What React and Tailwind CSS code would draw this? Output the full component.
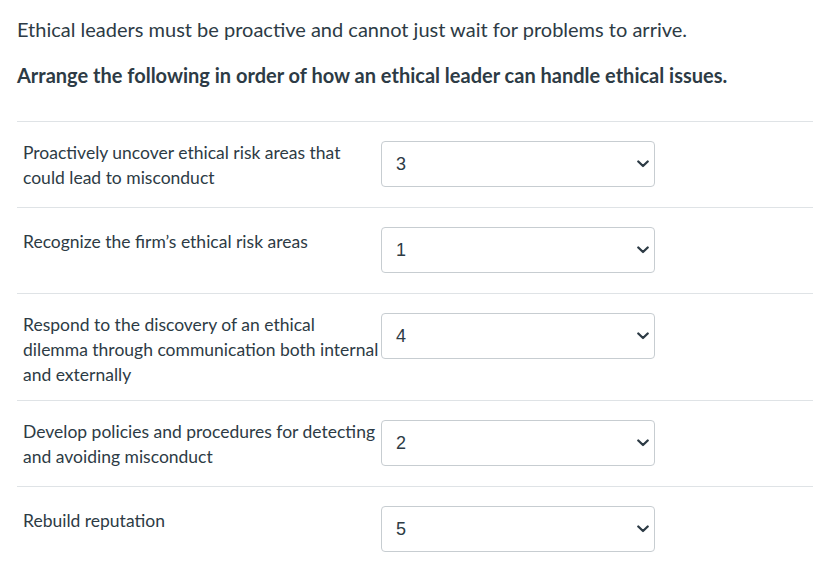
import React from 'react';

const items = [
  { text: 'Proactively uncover ethical risk areas that could lead to misconduct', value: '3' },
  { text: 'Recognize the firm’s ethical risk areas', value: '1', single: true },
  { text: 'Respond to the discovery of an ethical dilemma through communication both internal and externally', value: '4' },
  { text: 'Develop policies and procedures for detecting and avoiding misconduct', value: '2' },
  { text: 'Rebuild reputation', value: '5', single: true },
];

function Chevron() {
  return (
    <svg width="12" height="8" viewBox="0 0 12 8" fill="none">
      <path d="M1.3 1.5 L6 6 L10.7 1.5" stroke="#2d3b45" strokeWidth="2.3" strokeLinecap="round" strokeLinejoin="round" />
    </svg>
  );
}

function SelectBox({ value }) {
  return (
    <div className="w-[274px] h-[46px] shrink-0 rounded-[4px] border border-[#c7cdd1] bg-white flex items-center justify-between pl-[14px] pr-[5px] mb-[8px]">
      <span className="text-[18px] text-[#2d3b45] font-['Liberation_Sans',Arial,sans-serif]">{value}</span>
      <Chevron />
    </div>
  );
}

export default function App() {
  return (
    <div className="w-[813px] h-[567px] bg-white overflow-hidden text-[#2d3b45] font-['Lato','Open_Sans',sans-serif]">
      <div className="pl-[17px] pt-[16px]">
        <p className="text-[20px] leading-[26px]">Ethical leaders must be proactive and cannot just wait for problems to arrive.</p>
        <p className="text-[20px] leading-[26px] font-bold mt-[20px]">Arrange the following in order of how an ethical leader can handle ethical issues.</p>
      </div>
      <div className="ml-[17px] mt-[33px]">
        {items.map((it) => (
          <div key={it.value} className="border-t border-[#dfe3e6] flex items-start pt-[19px] pb-[12px] pl-[6px]">
            <div className={`w-[358px] shrink-0 text-[17.5px] leading-[25px] pr-[2px] ${it.single ? 'mt-[2px]' : '-mt-[1px] mb-[1px]'}`}>{it.text}</div>
            <SelectBox value={it.value} />
          </div>
        ))}
      </div>
    </div>
  );
}
